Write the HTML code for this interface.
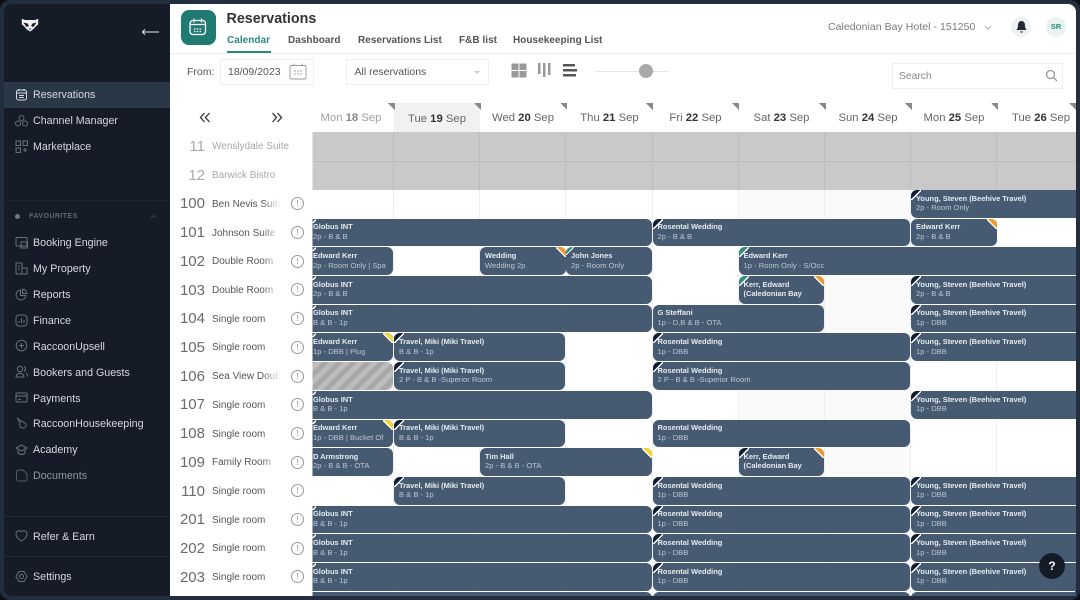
<!DOCTYPE html>
<html><head><meta charset="utf-8"><style>
html,body{margin:0;padding:0;width:1080px;height:600px;overflow:hidden;background:#0c1016}
*{box-sizing:border-box}
body{font-family:"Liberation Sans",sans-serif;position:relative}
.frame{position:absolute;left:0;top:0;width:1080px;height:600px;background:#222e3d;border-radius:10px}
.side{position:absolute;left:4px;top:4px;width:166px;height:592px;background:#151b27;border-radius:8px 0 0 8px}
.main{position:absolute;left:169.5px;top:4px;width:906.5px;height:592px;background:#fff;border-radius:0 8px 8px 0}
.abs,.n,.sv,.t,.ln,.num,.nm,.inf,.d,.tri,.b{position:absolute}
.n{left:33px;font-size:10.7px;color:#d5d9df;line-height:14px;white-space:nowrap;margin-top:1px}
.sv{left:15px;width:13px;height:13px;fill:none;stroke:#667180;stroke-width:1}
.t{font-size:10px;font-weight:bold;color:#555;top:34px;line-height:13px;letter-spacing:.03px;white-space:nowrap}
.d{top:110.5px;font-size:11.3px;line-height:14px;color:#666;white-space:nowrap;transform:translateX(-50%)}
.d b{color:#333}
.tri{top:103px;width:7px;height:7px;background:linear-gradient(45deg,transparent 50%,#888 50%)}
.cell{position:absolute;top:132px;width:1px;height:464px;background:#efefef}
.num{width:40px;left:165px;text-align:right;font-size:15px;color:#6a6a6a;line-height:18px;font-weight:normal;margin-top:1px}
.nm{left:212px;width:70px;overflow:hidden;white-space:nowrap;font-size:10px;color:#555;line-height:14px;margin-top:1px;-webkit-mask-image:linear-gradient(90deg,#000 72%,transparent 98%);mask-image:linear-gradient(90deg,#000 72%,transparent 98%)}
.inf{left:291px;width:13px;height:13px;border:1px solid #999;border-radius:50%;font-size:8px;line-height:11px;text-align:center;color:#888}
.gr{clip-path:inset(132px 4px 4px 312.5px);position:absolute;left:0;top:0;width:1080px;height:600px}
.b{height:27.8px;background:#465a72;border-radius:6px;padding:3.8px 0 0 5px;overflow:hidden;white-space:nowrap;color:#bcc6d2;font-size:7.6px;line-height:9.5px}
.b b{display:block;color:#e6eaee;font-size:7.5px;letter-spacing:-.03px}
.glo{left:308px;width:344px}.ros{left:652.5px;width:257.5px}.yo{left:911px;width:185px}.ek{left:308px;width:85px}.tr{left:394px;width:171px}.ke{left:738.5px;width:85.5px}
.b i{position:absolute;top:0;width:10px;height:10px}
.tl{left:0}.tl.w{left:4px;width:4px!important;height:4px!important;background:linear-gradient(135deg,#465a72 45%,#fff 45%,#fff 70%,#465a72 70%)}
.da{background:linear-gradient(135deg,#111c30 0 46%,#fff 46% 56%,transparent 56%)}
.gn{background:linear-gradient(135deg,#2f8f7c 0 46%,#fff 46% 56%,transparent 56%)}
.tr2{right:0}
.or{background:linear-gradient(225deg,#ef9a2b 0 46%,#fff 46% 56%,transparent 56%)}
.ye{background:linear-gradient(225deg,#f2d52f 0 46%,#fff 46% 56%,transparent 56%)}
.r100{top:189.9px}.r101{top:218.6px}.r102{top:247.3px}.r103{top:276px}.r104{top:304.7px}.r105{top:333.4px}.r106{top:362.1px}.r107{top:390.8px}.r108{top:419.5px}.r109{top:448.2px}.r110{top:476.9px}.r201{top:505.6px}.r202{top:534.3px}.r203{top:563px}.r204{top:591.7px}
</style></head><body>
<div class="frame"></div>
<div class="side"></div>
<div class="abs" style="left:4px;top:82px;width:166px;height:25.5px;background:#2a3747"></div>
<div class="abs" style="left:4px;top:200px;width:166px;height:1px;background:#1d2532"></div>
<div class="abs" style="left:4px;top:516px;width:166px;height:1px;background:#222b38"></div>
<div class="abs" style="left:4px;top:556px;width:166px;height:1px;background:#222b38"></div>

<svg class="abs" style="left:21px;top:18px" width="18" height="14" viewBox="0 0 18 14"><path d="M.8.8l3.200 1.200h10L17.200.8v5.700l-2 1.500-3.200 3.500-3 2-3-2-3.200-3.500-2-1.500z" fill="#f2f2f2"/><path d="M2.500 4.500l4 1 1.500 2.500-2.500 1zM15.500 4.500l-4 1L10 8l2.500 1zM7.500 10.500h3l-1.500 1.300z" fill="#151b27"/></svg>
<svg class="abs" style="left:141px;top:27px" width="19" height="10" viewBox="0 0 19 10"><path d="M4 2.500L1.500 5 4 7.500M2 5h16" fill="none" stroke="#e8eaed" stroke-width="1"/></svg>

<svg class="sv" style="top:88px;stroke:#d5d9df" viewBox="0 0 13 13"><rect x="1.5" y="2" width="10" height="10" rx="2"/><path d="M1.5 5h10M4 1v2M9 1v2M4 7.5h5M4 9.500h5"/></svg>
<div class="n" style="top:87px">Reservations</div>
<svg class="sv" style="top:114px" viewBox="0 0 13 13"><circle cx="6.500" cy="4" r="2.500"/><circle cx="3" cy="9.500" r="2.500"/><circle cx="10" cy="9.500" r="2.500"/></svg>
<div class="n" style="top:113px">Channel Manager</div>
<svg class="sv" style="top:140px" viewBox="0 0 13 13"><rect x="1" y="1" width="4.500" height="4.500"/><rect x="8" y="1" width="4.500" height="4.500"/><rect x="1" y="8" width="4.500" height="4.500"/><path d="M10 8v4M8 10h4"/></svg>
<div class="n" style="top:139px">Marketplace</div>

<div class="abs" style="left:15px;top:214px;width:5px;height:5px;border-radius:50%;background:#6d7785"></div>
<div class="abs" style="left:29px;top:212px;font-size:7px;font-weight:bold;letter-spacing:.45px;color:#5f6977;line-height:10px">FAVOURITES</div>
<svg class="abs" style="left:150px;top:214px" width="7" height="5" viewBox="0 0 7 5"><path d="M1 3.500l2.500-2 2.500 2" fill="none" stroke="#3b4553"/></svg>

<svg class="sv" style="top:236px" viewBox="0 0 13 13"><rect x="1" y="1.500" width="11" height="8.500" rx="1"/><rect x="6" y="6" width="6.500" height="6"/></svg>
<div class="n" style="top:235px">Booking Engine</div>
<svg class="sv" style="top:262px" viewBox="0 0 13 13"><path d="M1 12V1h6v11M7 6h5v6H1M3 4h2M3 7h2"/></svg>
<div class="n" style="top:261px">My Property</div>
<svg class="sv" style="top:288px" viewBox="0 0 13 13"><path d="M5.500 2a5 5 0 1 0 5.500 5.500H5.500z"/><path d="M7.500 1a5 5 0 0 1 4.500 4.500H7.500z"/></svg>
<div class="n" style="top:287px">Reports</div>
<svg class="sv" style="top:314px" viewBox="0 0 13 13"><rect x="1" y="1" width="11" height="11" rx="3"/><path d="M4 9V7M6.500 9V4M9 9V6"/></svg>
<div class="n" style="top:313px">Finance</div>
<svg class="sv" style="top:339px" viewBox="0 0 13 13"><circle cx="6.500" cy="6.500" r="5.300"/><path d="M6.500 4v5M4 6.500h5"/></svg>
<div class="n" style="top:338.500px">RaccoonUpsell</div>
<svg class="sv" style="top:365px" viewBox="0 0 13 13"><circle cx="5" cy="4" r="2.700"/><path d="M1 12c0-5 8-5 8 0zM9 1.500c2 .5 2 4 0 5M11 8c1 1 1.500 2 1.500 3.500"/></svg>
<div class="n" style="top:364.500px">Bookers and Guests</div>
<svg class="sv" style="top:391px" viewBox="0 0 13 13"><rect x="1" y="2" width="11" height="9" rx="1"/><path d="M1 5h11M3 8.500h3"/></svg>
<div class="n" style="top:390.500px">Payments</div>
<svg class="sv" style="top:417px" viewBox="0 0 13 13"><path d="M3 2l2 4c-1 2 0 5 3 5s4-3 2-5L6 4z"/><path d="M3 1l-1 1"/></svg>
<div class="n" style="top:416px">RaccoonHousekeeping</div>
<svg class="sv" style="top:443px" viewBox="0 0 13 13"><path d="M1 5l5.500-3L12 5 6.500 8zM3 7v3c2 2 5 2 7 0V7"/></svg>
<div class="n" style="top:442px">Academy</div>
<svg class="sv" style="top:469px;stroke:#525c6a" viewBox="0 0 13 13"><path d="M1.500 3a2 2 0 0 1 2-2H8l4 4v5a2 2 0 0 1-2 2H3.500a2 2 0 0 1-2-2z"/></svg>
<div class="n" style="top:468px;color:#8d96a2">Documents</div>
<svg class="sv" style="top:529px" viewBox="0 0 13 13"><path d="M6.500 12C3 10 1 7.500 1 5c0-3 3-4 5.500-2.500C9 1 12 2 12 5c0 2.500-2 5-5.500 7z"/></svg>
<div class="n" style="top:528.500px">Refer &amp; Earn</div>
<svg class="sv" style="top:570px" viewBox="0 0 13 13"><path d="M4 1.500h5l3 5-3 5H4l-3-5z"/><circle cx="6.500" cy="6.500" r="2"/></svg>
<div class="n" style="top:569px">Settings</div>

<div class="main"></div>
<!-- header -->
<div class="abs" style="left:181px;top:10px;width:35px;height:35px;border-radius:8px;background:#1f7a72"></div>
<svg class="abs" style="left:188px;top:17px" width="20" height="20" viewBox="0 0 20 20" fill="none" stroke="#fff" stroke-width="1.300"><rect x="2" y="3.500" width="15.500" height="14" rx="3"/><path d="M2 7.500h15.500M6 1.500v4M13.500 1.500v4"/><path d="M6 12h8M6 14.500h8" stroke-dasharray="1.500 1.300"/></svg>
<div class="abs" style="left:226.500px;top:10px;font-size:14.300px;line-height:18px;font-weight:bold;color:#333;white-space:nowrap">Reservations</div>
<div class="t" style="left:227px;color:#2a8a80">Calendar</div>
<div class="t" style="left:288px">Dashboard</div>
<div class="t" style="left:358px">Reservations List</div>
<div class="t" style="left:459px">F&amp;B list</div>
<div class="t" style="left:513px">Housekeeping List</div>
<div class="abs" style="left:227px;top:51px;width:44px;height:1.500px;background:#2a8a80"></div>
<div class="abs" style="left:170px;top:53px;width:906px;height:1px;background:#eee"></div>

<div class="abs" style="left:828px;top:21px;font-size:10.500px;line-height:13px;color:#7a7a7a;letter-spacing:.05px;white-space:nowrap">Caledonian Bay Hotel - 151250</div>
<svg class="abs" style="left:984px;top:25px" width="8" height="5" viewBox="0 0 8 5"><path d="M1 1l3 3 3-3" fill="none" stroke="#999" stroke-width=".8"/></svg>
<div class="abs" style="left:1011px;top:17px;width:20px;height:20px;border-radius:50%;background:#f0f1f3"></div>
<svg class="abs" style="left:1016px;top:20px" width="11" height="14" viewBox="0 0 11 14"><path d="M5.500 1C3 1 2 3 2 5.500 2 8 1 9 .5 10h10C10 9 9 8 9 5.500 9 3 8 1 5.500 1zM4 11.500h3c0 1.500-3 1.500-3 0z" fill="#222a36"/></svg>
<div class="abs" style="left:1046px;top:17px;width:20px;height:20px;border-radius:50%;background:#e9f3f1;text-align:center;font-size:7.500px;font-weight:bold;line-height:20px;color:#2a8a80">SR</div>

<!-- toolbar -->
<div class="abs" style="left:187px;top:66px;font-size:10.500px;line-height:13px;color:#555">From:</div>
<div class="abs" style="left:220px;top:59px;width:94px;height:26px;border:1px solid #f0f0f0"></div>
<div class="abs" style="left:228px;top:66px;font-size:10.500px;line-height:13px;color:#555;white-space:nowrap">18/09/2023</div>
<svg class="abs" style="left:289px;top:63px" width="18" height="17" viewBox="0 0 18 17" fill="none" stroke="#999" stroke-width=".9"><rect x="1" y="2.500" width="16" height="13.500" rx="1.500"/><path d="M5 .5v3M13 .5v3M6 7v6M9 7v6M12 7v6" stroke-dasharray="2 1"/></svg>
<div class="abs" style="left:346px;top:59px;width:143px;height:26px;border:1px solid #f0f0f0"></div>
<div class="abs" style="left:354.500px;top:66px;font-size:10.500px;line-height:13px;color:#555;white-space:nowrap">All reservations</div>
<svg class="abs" style="left:474px;top:71px" width="6" height="4" viewBox="0 0 6 4"><path d="M0 0h6L3 3z" fill="#ccc"/></svg>
<svg class="abs" style="left:511px;top:63px" width="16" height="15" viewBox="0 0 16 15" fill="#999"><rect width="7" height="6.500" x=".5" y=".500"/><rect width="7" height="6.500" x="8.500" y=".500"/><rect width="7" height="6.500" x=".5" y="8"/><rect width="7" height="6.500" x="8.500" y="8"/></svg>
<svg class="abs" style="left:537px;top:62px" width="15" height="16" viewBox="0 0 15 16" fill="#999"><rect x="1" y="1" width="2.500" height="11"/><rect x="6" y="1" width="2.500" height="14"/><rect x="11" y="1" width="2.500" height="12"/></svg>
<svg class="abs" style="left:562px;top:64px" width="16" height="13" viewBox="0 0 16 13" fill="#555"><rect x="1" y="0" width="12" height="2.500"/><rect x="1" y="5" width="14" height="2.500"/><rect x="1" y="10" width="13" height="2.500"/></svg>
<div class="abs" style="left:596px;top:71px;width:72px;height:1px;background:#e4e4e4"></div>
<div class="abs" style="left:639px;top:64px;width:14px;height:14px;border-radius:50%;background:#a9a9a9"></div>
<div class="abs" style="left:892px;top:63px;width:171px;height:26px;border:1px solid #f0f0f0"></div>
<div class="abs" style="left:899px;top:70px;font-size:10.300px;line-height:13px;color:#888">Search</div>
<svg class="abs" style="left:1045px;top:69px" width="13" height="13" viewBox="0 0 13 13" fill="none" stroke="#999" stroke-width="1.300"><circle cx="5.500" cy="5.500" r="4"/><path d="M8.500 8.500l3.500 3.500"/></svg>

<!-- days header -->
<div class="abs" style="left:393.500px;top:103px;width:86px;height:29px;background:#f1f1f1"></div>
<svg class="abs" style="left:199px;top:112px" width="12" height="11" viewBox="0 0 12 11" fill="none" stroke="#333" stroke-width="1.300"><path d="M5.500 1L1.500 5.500l4 4.500M10.500 1l-4 4.500 4 4.500"/></svg>
<svg class="abs" style="left:271px;top:112px" width="12" height="11" viewBox="0 0 12 11" fill="none" stroke="#333" stroke-width="1.300"><path d="M1.500 1l4 4.500-4 4.500M6.500 1l4 4.500-4 4.500"/></svg>
<div class="d" style="left:351px;color:#a0a0a0">Mon <b style="color:#888">18</b> Sep</div>
<div class="d" style="left:437px;top:111.500px">Tue <b>19</b> Sep</div>
<div class="d" style="left:523px">Wed <b>20</b> Sep</div>
<div class="d" style="left:609.500px">Thu <b>21</b> Sep</div>
<div class="d" style="left:695.500px">Fri <b>22</b> Sep</div>
<div class="d" style="left:781.500px">Sat <b>23</b> Sep</div>
<div class="d" style="left:868px">Sun <b>24</b> Sep</div>
<div class="d" style="left:954px">Mon <b>25</b> Sep</div>
<div class="d" style="left:1041px">Tue <b>26</b> Sep</div>
<div class="tri" style="left:388px"></div><div class="tri" style="left:474px"></div><div class="tri" style="left:560px"></div><div class="tri" style="left:646px"></div><div class="tri" style="left:732px"></div><div class="tri" style="left:819px"></div><div class="tri" style="left:905px"></div><div class="tri" style="left:991px"></div><div class="tri" style="left:1069px"></div>

<!-- room labels -->
<div class="num" style="top:137px;color:#aaa">11</div><div class="nm" style="top:139px;color:#a8a8a8;-webkit-mask-image:none;mask-image:none;width:90px">Wenslydale Suite</div>
<div class="num" style="top:166px;color:#aaa">12</div><div class="nm" style="top:168px;color:#a8a8a8;-webkit-mask-image:none;mask-image:none;width:90px">Barwick Bistro</div>
<div class="num" style="top:194px">100</div><div class="nm" style="top:197px">Ben Nevis Suite</div><div class="inf" style="top:197px">!</div>
<div class="num" style="top:223px">101</div><div class="nm" style="top:226px">Johnson Suite</div><div class="inf" style="top:226px">!</div>
<div class="num" style="top:252px">102</div><div class="nm" style="top:254px">Double Room</div><div class="inf" style="top:255px">!</div>
<div class="num" style="top:281px">103</div><div class="nm" style="top:283px">Double Room</div><div class="inf" style="top:283px">!</div>
<div class="num" style="top:309px">104</div><div class="nm" style="top:312px">Single room</div><div class="inf" style="top:312px">!</div>
<div class="num" style="top:338px">105</div><div class="nm" style="top:340px">Single room</div><div class="inf" style="top:341px">!</div>
<div class="num" style="top:367px">106</div><div class="nm" style="top:369px">Sea View Double</div><div class="inf" style="top:370px">!</div>
<div class="num" style="top:395px">107</div><div class="nm" style="top:398px">Single room</div><div class="inf" style="top:398px">!</div>
<div class="num" style="top:424px">108</div><div class="nm" style="top:427px">Single room</div><div class="inf" style="top:427px">!</div>
<div class="num" style="top:453px">109</div><div class="nm" style="top:455px">Family Room</div><div class="inf" style="top:456px">!</div>
<div class="num" style="top:482px">110</div><div class="nm" style="top:484px">Single room</div><div class="inf" style="top:484px">!</div>
<div class="num" style="top:510px">201</div><div class="nm" style="top:513px">Single room</div><div class="inf" style="top:513px">!</div>
<div class="num" style="top:539px">202</div><div class="nm" style="top:541px">Single room</div><div class="inf" style="top:542px">!</div>
<div class="num" style="top:568px">203</div><div class="nm" style="top:570px">Single room</div><div class="inf" style="top:570px">!</div>

<!-- grid -->
<div class="gr">
<div class="abs" style="left:738px;top:190px;width:172.500px;height:406px;background:#fafafa"></div>
<div class="cell" style="left:393px"></div><div class="cell" style="left:479px"></div><div class="cell" style="left:565px"></div><div class="cell" style="left:652px"></div><div class="cell" style="left:738px"></div><div class="cell" style="left:824px"></div><div class="cell" style="left:910px"></div><div class="cell" style="left:996px"></div>
<div class="abs" style="left:312px;top:132px;width:770px;height:58px;background:#c9c9c9"></div>
<div class="abs" style="left:312px;top:160.500px;width:770px;height:1px;background:#bcbcbc"></div>
<div class="abs" style="left:393px;top:132px;width:1px;height:58px;background:#bdbdbd"></div><div class="abs" style="left:479px;top:132px;width:1px;height:58px;background:#bdbdbd"></div><div class="abs" style="left:565px;top:132px;width:1px;height:58px;background:#bdbdbd"></div><div class="abs" style="left:652px;top:132px;width:1px;height:58px;background:#bdbdbd"></div><div class="abs" style="left:738px;top:132px;width:1px;height:58px;background:#bdbdbd"></div><div class="abs" style="left:824px;top:132px;width:1px;height:58px;background:#bdbdbd"></div><div class="abs" style="left:910px;top:132px;width:1px;height:58px;background:#bdbdbd"></div><div class="abs" style="left:996px;top:132px;width:1px;height:58px;background:#bdbdbd"></div>

<div class="b yo r100"><i class="tl da"></i><b>Young, Steven (Beehive Travel)</b>2p - Room Only</div>

<div class="b glo r101"><i class="tl w"></i><b>Globus INT</b>2p - B &amp; B</div>
<div class="b ros r101"><i class="tl da"></i><b>Rosental Wedding</b>2p - B &amp; B</div>
<div class="b r101" style="left:911px;width:85.500px"><i class="tr2 or"></i><b>Edward Kerr</b>2p - B &amp; B</div>

<div class="b ek r102"><i class="tl w"></i><b>Edward Kerr</b>2p - Room Only | Spa</div>
<div class="b r102" style="left:480px;width:85.500px"><i class="tr2 or"></i><b>Wedding</b>Wedding 2p</div>
<div class="b r102" style="left:566px;width:86px"><i class="tl gn" style="width:8px;height:8px"></i><b>John Jones</b>2p - Room Only</div>
<div class="b r102" style="left:738.500px;width:350px"><i class="tl gn"></i><b>Edward Kerr</b>1p - Room Only - S/Occ</div>

<div class="b glo r103"><i class="tl w"></i><b>Globus INT</b>2p - B &amp; B</div>
<div class="b ke r103"><i class="tl gn"></i><i class="tr2 or"></i><b>Kerr, Edward</b><b>(Caledonian Bay</b></div>
<div class="b yo r103"><i class="tl da"></i><b>Young, Steven (Beehive Travel)</b>2p - B &amp; B</div>

<div class="b glo r104"><i class="tl w"></i><b>Globus INT</b>B &amp; B - 1p</div>
<div class="b r104" style="left:652.500px;width:171.500px"><b>G Steffani</b>1p - D,B &amp; B - OTA</div>
<div class="b yo r104"><i class="tl da"></i><b>Young, Steven (Beehive Travel)</b>1p - DBB</div>

<div class="b ek r105"><i class="tl w"></i><i class="tr2 ye"></i><b>Edward Kerr</b>1p - DBB | Plug</div>
<div class="b tr r105"><i class="tl da"></i><b>Travel, Miki (Miki Travel)</b>B &amp; B - 1p</div>
<div class="b ros r105"><i class="tl da"></i><b>Rosental Wedding</b>1p - DBB</div>
<div class="b yo r105"><i class="tl da"></i><b>Young, Steven (Beehive Travel)</b>1p - DBB</div>

<div class="abs r106" style="left:308px;width:85px;height:27.700px;border-radius:6px;background:repeating-linear-gradient(135deg,#a8a8a8 0 5px,#bdbdbd 5px 10px)"></div>
<div class="b tr r106"><i class="tl da"></i><b>Travel, Miki (Miki Travel)</b>2 P - B &amp; B -Superior Room</div>
<div class="b ros r106"><i class="tl da"></i><b>Rosental Wedding</b>2 P - B &amp; B -Superior Room</div>

<div class="b glo r107"><i class="tl w"></i><b>Globus INT</b>B &amp; B - 1p</div>
<div class="b yo r107"><i class="tl da"></i><b>Young, Steven (Beehive Travel)</b>1p - DBB</div>

<div class="b ek r108"><i class="tl w"></i><i class="tr2 ye"></i><b>Edward Kerr</b>1p - DBB | Bucket Of</div>
<div class="b tr r108"><i class="tl da"></i><b>Travel, Miki (Miki Travel)</b>B &amp; B - 1p</div>
<div class="b ros r108"><b>Rosental Wedding</b>1p - DBB</div>

<div class="b ek r109"><b>D Armstrong</b>2p - B &amp; B - OTA</div>
<div class="b r109" style="left:480px;width:172px"><i class="tr2 ye"></i><b>Tim Hall</b>2p - B &amp; B - OTA</div>
<div class="b ke r109"><i class="tl da"></i><i class="tr2 or"></i><b>Kerr, Edward</b><b>(Caledonian Bay</b></div>

<div class="b tr r110"><i class="tl da"></i><b>Travel, Miki (Miki Travel)</b>B &amp; B - 1p</div>
<div class="b ros r110"><i class="tl da"></i><b>Rosental Wedding</b>1p - DBB</div>
<div class="b yo r110"><i class="tl da"></i><b>Young, Steven (Beehive Travel)</b>1p - DBB</div>

<div class="b glo r201"><i class="tl w"></i><b>Globus INT</b>B &amp; B - 1p</div>
<div class="b ros r201"><i class="tl da"></i><b>Rosental Wedding</b>1p - DBB</div>
<div class="b yo r201"><i class="tl da"></i><b>Young, Steven (Beehive Travel)</b>1p - DBB</div>

<div class="b glo r202"><i class="tl w"></i><b>Globus INT</b>B &amp; B - 1p</div>
<div class="b ros r202"><i class="tl da"></i><b>Rosental Wedding</b>1p - DBB</div>
<div class="b yo r202"><i class="tl da"></i><b>Young, Steven (Beehive Travel)</b>1p - DBB</div>

<div class="b glo r203"><i class="tl w"></i><b>Globus INT</b>B &amp; B - 1p</div>
<div class="b ros r203"><i class="tl da"></i><b>Rosental Wedding</b>1p - DBB</div>
<div class="b yo r203"><i class="tl da"></i><b>Young, Steven (Beehive Travel)</b>1p - DBB</div>

<div class="b glo r204"></div><div class="b ros r204"></div><div class="b yo r204"></div>
</div>

<div class="abs" style="left:1039px;top:553px;width:26px;height:26px;border-radius:50%;background:#141b26;color:#fff;text-align:center;font-size:12px;font-weight:bold;line-height:26px">?</div>
</body></html>
